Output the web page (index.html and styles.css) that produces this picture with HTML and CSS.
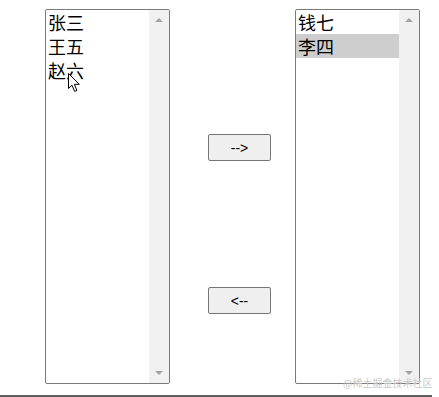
FILE: index.html
```
<!DOCTYPE html>
<html lang="zh">
<head>
<meta charset="utf-8">
<link rel="stylesheet" href="styles.css">
</head>
<body>
<div class="page">
  <div class="row">
    <div class="listbox">
      <div class="list">
        <div class="opt">张三</div>
        <div class="opt">王五</div>
        <div class="opt">赵六</div>
      </div>
      <div class="scrollbar"><span class="arr up"></span><span class="arr down"></span></div>
    </div>
    <div class="controls">
      <button class="btn">--&gt;</button>
      <button class="btn">&lt;--</button>
    </div>
    <div class="listbox">
      <div class="list">
        <div class="opt">钱七</div>
        <div class="opt sel">李四</div>
      </div>
      <div class="scrollbar"><span class="arr up"></span><span class="arr down"></span></div>
    </div>
  </div>
  <div class="rule"></div>
  <div class="mark">@稀土掘金技术社区</div>
  <svg class="cursor" width="13" height="20" viewBox="0 0 13 20"><path d="M0.5 0.5 L0.5 15.5 L4 12.2 L6.6 18.4 L8.9 17.4 L6.4 11.3 L11.3 11.3 Z" fill="#fff" stroke="#000" stroke-width="1" stroke-linejoin="miter"/></svg>
</div>
</body>
</html>
```
FILE: styles.css
```
html, body { margin: 0; padding: 0; background: #fff; }
.page { position: relative; width: 439px; height: 397px; overflow: hidden; font-family: "Noto Sans CJK SC", sans-serif; }
.row { display: flex; align-items: flex-start; padding: 9px 0 0 45px; }
.listbox { width: 125px; height: 375px; box-sizing: border-box; border: 1px solid #7a7a7a; border-radius: 2px; display: flex; overflow: hidden; }
.list { flex: 1; padding-top: 0; }
.opt { height: 24px; line-height: 24px; font-size: 18px; padding-left: 2px; color: #000; }
.opt.sel { background: #cecece; }
.scrollbar { width: 20px; background: #f1f1f1; display: flex; flex-direction: column; justify-content: space-between; align-items: center; padding: 8px 0; box-sizing: border-box; }
.arr { width: 0; height: 0; border-left: 4px solid transparent; border-right: 4px solid transparent; }
.arr.up { border-bottom: 4px solid #a3a3a3; }
.arr.down { border-top: 4px solid #a3a3a3; }
.controls { width: 125px; padding: 125px 0 0 38px; box-sizing: border-box; display: flex; flex-direction: column; align-items: flex-start; gap: 126px; }
.btn { width: 63px; height: 27px; box-sizing: border-box; border: 1px solid #767676; border-radius: 2px; background: #efefef; font-family: "Liberation Sans", Arial, sans-serif; font-size: 14px; color: #000; padding: 0; margin: 0; }
.rule { margin-top: 11px; width: 432px; height: 2px; background: #5e5e5e; }
.mark { position: absolute; left: 343px; top: 375px; font-size: 10px; color: #c8c8c8; white-space: nowrap; }
.cursor { position: absolute; left: 68px; top: 73px; }
```
